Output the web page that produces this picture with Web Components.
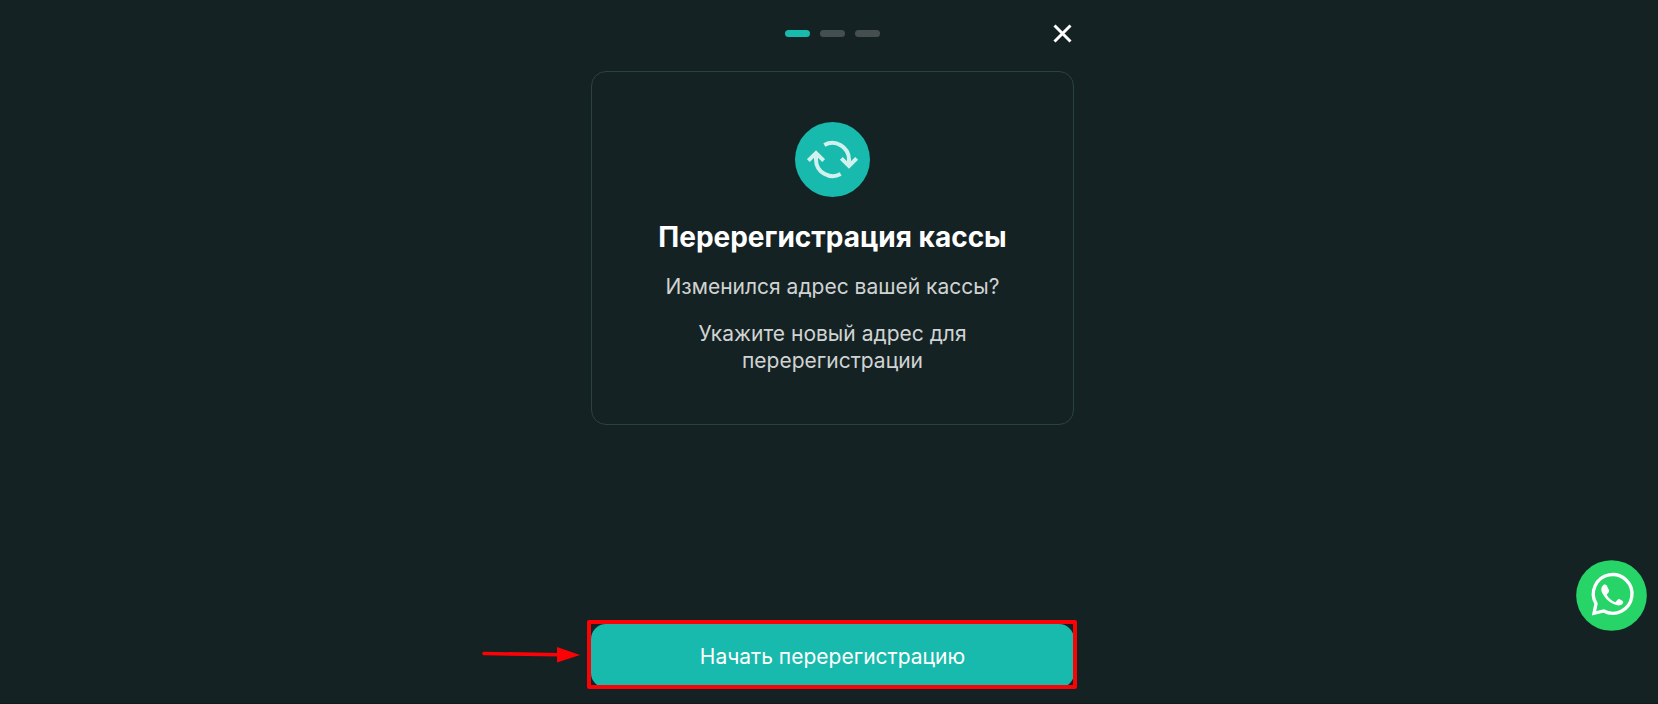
<!DOCTYPE html>
<html lang="ru">
<head>
<meta charset="utf-8">
<meta name="viewport" content="width=device-width, initial-scale=1">
<title>Перерегистрация кассы</title>
<style>
  html, body {
    height: 100%;
    margin: 0;
  }
  body {
    background: #152223;
    color: #fff;
    font-family: Inter, "Liberation Sans", sans-serif;
  }
</style>
</head>
<body>

<register-wizard>
  <step-header slot="header" steps="3" current="1"></step-header>
  <info-card>
    <refresh-icon slot="icon"></refresh-icon>
    <span slot="title">Перерегистрация кассы</span>
    <p>Изменился адрес вашей кассы?</p>
    <p>Укажите новый адрес для перерегистрации</p>
  </info-card>
  <action-button slot="footer">Начать перерегистрацию</action-button>
</register-wizard>
<whatsapp-link></whatsapp-link>

<script>
class RegisterWizard extends HTMLElement {
  constructor() {
    super();

    this.shadow = this.attachShadow({mode: 'open'});
    this.shadow.innerHTML = `
<style>
  :host {
    display: block;
    height: 100%;
    min-height: 620px;
    box-sizing: border-box;
    padding-left: 7px;
    border-bottom: 1px solid #101a1b;
  }
  main {
    display: flex;
    flex-direction: column;
    height: 100%;
    max-width: 483px;
    margin: 0 auto;
    box-sizing: border-box;
    padding: 16px 0 15px;
  }
  footer {
    margin-top: auto;
  }
</style>

<main>
  <slot name="header"></slot>
  <slot></slot>
  <footer><slot name="footer"></slot></footer>
</main>
`;
  }
}

class StepHeader extends HTMLElement {
  constructor() {
    super();

    this.shadow = this.attachShadow({mode: 'open'});
  }

  connectedCallback() {
    const steps = Number(this.getAttribute('steps'));
    const current = Number(this.getAttribute('current'));
    let items = '';
    for (let i = 1; i <= steps; i++) {
      items += `<li ${i === current ? 'class="active" aria-current="step"' : ''}></li>`;
    }

    this.shadow.innerHTML = `
<style>
  :host {
    display: grid;
    grid-template-columns: 1fr auto 1fr;
    align-items: center;
    height: 35px;
    margin-bottom: 20px;
  }
  ol {
    grid-column: 2;
    display: flex;
    gap: 10px;
    margin: 0;
    padding: 0;
    list-style: none;
  }
  li {
    width: 25px;
    height: 7px;
    border-radius: 4px;
    background: #454f50;
  }
  li.active {
    background: #17baac;
  }
  button {
    justify-self: end;
    display: flex;
    padding: 0;
    border: 0;
    background: none;
    color: #fff;
    cursor: pointer;
  }
</style>

<ol>${items}</ol>
<button type="button" aria-label="Закрыть">
  <svg width="23" height="23" viewBox="0 0 23 23" fill="none" stroke="currentColor" stroke-width="3">
    <path d="M3.500 3.500 19.500 19.500M19.500 3.500 3.500 19.500"/>
  </svg>
</button>
`;
  }
}

class InfoCard extends HTMLElement {
  constructor() {
    super();

    this.shadow = this.attachShadow({mode: 'open'});
    this.shadow.innerHTML = `
<style>
  :host {
    display: block;
    border: 1px solid #2a4242;
    border-radius: 15px;
    padding: 50px 60px;
    text-align: center;
  }
  h1 {
    margin: 20px 0 16px;
    font-size: 28px;
    line-height: 40px;
    font-weight: 700;
    white-space: nowrap;
  }
  .text {
    display: grid;
    gap: 20px;
    color: #d0d3d3;
    font-size: 21px;
    line-height: 27px;
  }
  ::slotted(p) {
    margin: 0;
  }
</style>

<slot name="icon"></slot>
<h1><slot name="title"></slot></h1>
<div class="text"><slot></slot></div>
`;
  }
}

class RefreshIcon extends HTMLElement {
  constructor() {
    super();

    this.shadow = this.attachShadow({mode: 'open'});
    this.shadow.innerHTML = `
<style>
  :host {
    display: flex;
    justify-content: center;
  }
</style>

<svg width="75" height="75" viewBox="0 0 225 225" aria-hidden="true">
  <circle cx="112.5" cy="112.5" r="112.5" fill="#17baac"/>
  <g fill="none" stroke="#d1f1ee" stroke-width="12">
    <path d="M88 69A50 50 0 0 1 162 112V130M139 109 162 132 185 109"/>
    <path d="M137 156A50 50 0 0 1 63 113V95M86 116 63 93 40 116"/>
  </g>
</svg>
`;
  }
}

class ActionButton extends HTMLElement {
  constructor() {
    super();

    this.shadow = this.attachShadow({mode: 'open'});
    this.shadow.innerHTML = `
<style>
  :host {
    display: block;
    position: relative;
  }
  button {
    display: block;
    width: 100%;
    height: 64px;
    border: 0;
    border-radius: 15px;
    background: #17baac;
    color: #fff;
    font: inherit;
    font-size: 21px;
    line-height: 27px;
    cursor: pointer;
  }
  /* marker drawn over the button */
  .frame {
    position: absolute;
    inset: -4px -3px -1px -4px;
    border: 4px solid #fb0207;
    border-radius: 2px;
    pointer-events: none;
  }
  .arrow {
    position: absolute;
    right: 100%;
    top: 20px;
    margin-right: 10px;
  }
</style>

<button type="button"><slot></slot></button>
<div class="frame"></div>
<svg class="arrow" width="100" height="20" viewBox="0 0 100 20" aria-hidden="true">
  <path d="M3 9.5 80 10.8" stroke="#fb0207" stroke-width="3.6" stroke-linecap="round"/>
  <path d="M76 3 99 11 76 18.500Z" fill="#fb0207"/>
</svg>
`;
  }
}

class WhatsappLink extends HTMLElement {
  constructor() {
    super();

    this.shadow = this.attachShadow({mode: 'open'});
    this.shadow.innerHTML = `
<style>
  :host {
    position: fixed;
    right: 11px;
    bottom: 73px;
  }
  a {
    display: block;
  }
  svg {
    display: block;
  }
</style>

<a href="#whatsapp" aria-label="WhatsApp">
  <svg width="71" height="71" viewBox="0 0 213 213">
    <circle cx="106.500" cy="106.500" r="106" fill="#26d467"/>
    <path fill="none" stroke="#fff" stroke-width="10" d="M60 131A58 58 0 1 1 83 153L54 160Z"/>
    <path fill="#fff" d="M82 75C84 73 90 73 92 76L99 91C100 94 99 96 97 98L92 104C98 115 107 122 118 127L125 119C127 117 129 117 131 118L139 122C143 124 142 129 139 132C133 138 123 137 114 133C98 126 86 114 79 100C74 90 75 81 82 75Z"/>
  </svg>
</a>
`;
  }
}

customElements.define('register-wizard', RegisterWizard);
customElements.define('step-header', StepHeader);
customElements.define('info-card', InfoCard);
customElements.define('refresh-icon', RefreshIcon);
customElements.define('action-button', ActionButton);
customElements.define('whatsapp-link', WhatsappLink);
</script>
</body>
</html>
